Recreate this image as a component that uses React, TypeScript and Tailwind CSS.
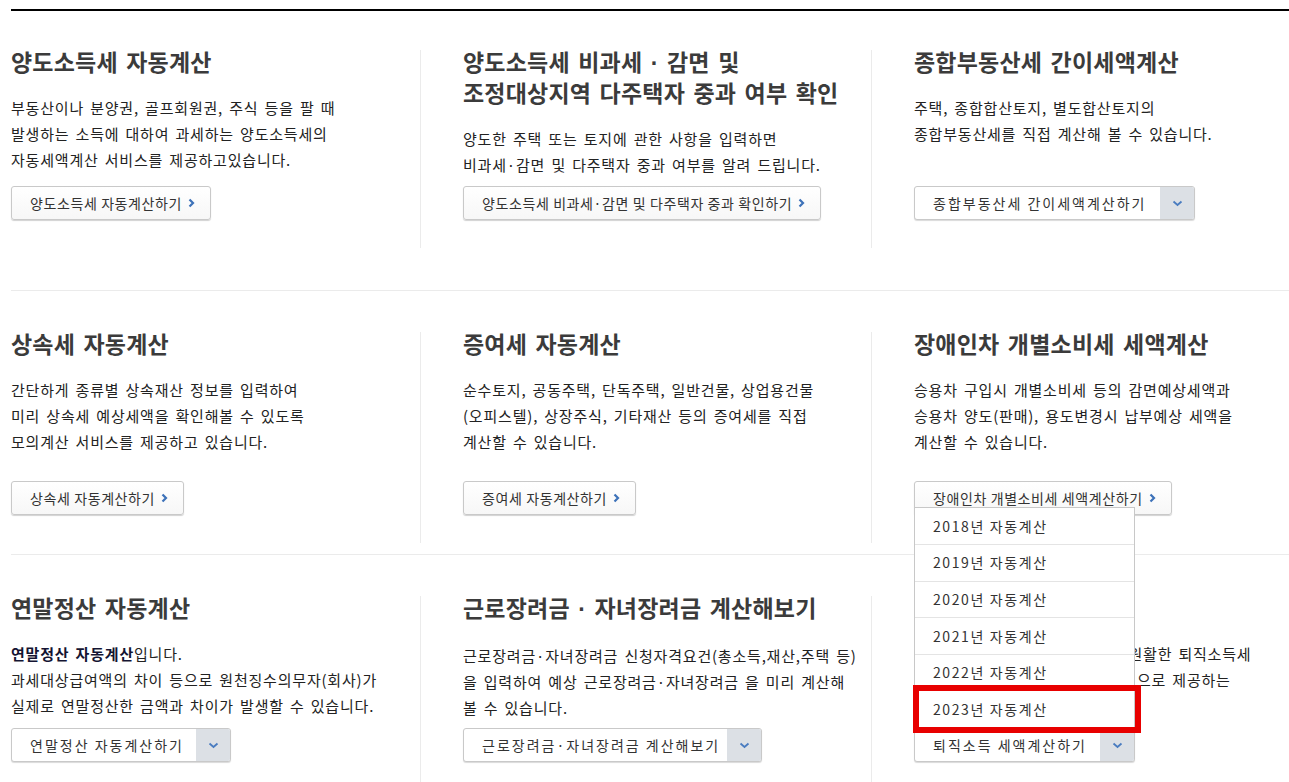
import React from 'react';

type Action =
  | { kind: 'link'; label: string }
  | { kind: 'select'; label: string; width: string; open?: boolean };

interface Item {
  title: string[];
  lines: React.ReactNode[];
  action: Action;
}

interface Row {
  rowClass: string;
  itemClass: string;
  items: Item[];
}

const years = ['2018', '2019', '2020', '2021', '2022', '2023'];

const ChevronRight = () => (
  <svg width="7" height="10" viewBox="0 0 7 10" className="shrink-0">
    <path d="M1.5 1.5L5 5L1.5 8.5" stroke="#3d72b9" strokeWidth="2.2" fill="none" />
  </svg>
);

const ChevronDown = () => (
  <svg width="11" height="7" viewBox="0 0 11 7">
    <path d="M1.5 1.5L5.5 5L9.5 1.5" stroke="#4a7cc0" strokeWidth="1.8" fill="none" />
  </svg>
);

// the CJK font draws the middle dot full width; the reference uses a narrow one
const withNarrowDot = (text: string) => {
  const parts = text.split('·');
  return parts.map((p, i) => (
    <React.Fragment key={i}>
      {p}
      {i < parts.length - 1 && <span className="font-['Liberation_Sans']">·</span>}
    </React.Fragment>
  ));
};

const LinkButton: React.FC<{ label: string }> = ({ label }) => (
  <button className="flex h-[34px] w-fit items-center gap-[6px] rounded-[3px] border border-[#c9c9c9] bg-gradient-to-b from-white to-[#f7f7f7] pl-[18px] pr-[15px] text-[14px] tracking-[0.6px] text-[#333] shadow-[0_1px_1px_rgba(0,0,0,0.18)]">
    <span className="whitespace-nowrap">{label}</span>
    <ChevronRight />
  </button>
);

const SelectButton: React.FC<{ label: string; width: string; open?: boolean }> = ({ label, width, open }) => (
  <div className={`relative ${width}`}>
    {open && (
      <div className="absolute bottom-full left-0 z-10 w-full border border-b-0 border-[#c8c8c8] bg-white">
        {years.map((y) => (
          <div
            key={y}
            className="flex h-[36.6px] items-center border-b border-[#e4e4e4] pl-[18px] text-[14px] tracking-[1.6px] text-[#333] last:border-b-0"
          >
            {y}년 자동계산
          </div>
        ))}
        <div className="pointer-events-none absolute left-[-2px] top-[177px] h-[48px] w-[228px] border-[6px] border-[#e80000]" />
      </div>
    )}
    <div className="flex h-[34px] overflow-hidden rounded-[3px] border border-[#c9c9c9] bg-white shadow-[0_1px_1px_rgba(0,0,0,0.15)]">
      <span className="flex flex-1 items-center whitespace-nowrap pl-[18px] text-[14px] tracking-[2px] text-[#333]">
        {label}
      </span>
      <span className="flex w-[34px] shrink-0 items-center justify-center bg-[#dce0e5]">
        <ChevronDown />
      </span>
    </div>
  </div>
);

const rows: Row[] = [
  {
    rowClass: 'pt-[39px] pb-[42px] border-b border-[#ebebeb]',
    itemClass: 'h-[198px]',
    items: [
      {
        title: ['양도소득세 자동계산'],
        lines: [
          '부동산이나 분양권, 골프회원권, 주식 등을 팔 때',
          '발생하는 소득에 대하여 과세하는 양도소득세의',
          '자동세액계산 서비스를 제공하고있습니다.',
        ],
        action: { kind: 'link', label: '양도소득세 자동계산하기' },
      },
      {
        title: ['양도소득세 비과세 · 감면 및', '조정대상지역 다주택자 중과 여부 확인'],
        lines: ['양도한 주택 또는 토지에 관한 사항을 입력하면', '비과세·감면 및 다주택자 중과 여부를 알려 드립니다.'],
        action: { kind: 'link', label: '양도소득세 비과세·감면 및 다주택자 중과 확인하기' },
      },
      {
        title: ['종합부동산세 간이세액계산'],
        lines: ['주택, 종합합산토지, 별도합산토지의', '종합부동산세를 직접 계산해 볼 수 있습니다.'],
        action: { kind: 'select', label: '종합부동산세 간이세액계산하기', width: 'w-[281px]' },
      },
    ],
  },
  {
    rowClass: 'pt-[41px] pb-[11px] border-b border-[#ebebeb]',
    itemClass: 'h-[211px]',
    items: [
      {
        title: ['상속세 자동계산'],
        lines: [
          '간단하게 종류별 상속재산 정보를 입력하여',
          '미리 상속세 예상세액을 확인해볼 수 있도록',
          '모의계산 서비스를 제공하고 있습니다.',
        ],
        action: { kind: 'link', label: '상속세 자동계산하기' },
      },
      {
        title: ['증여세 자동계산'],
        lines: [
          '순수토지, 공동주택, 단독주택, 일반건물, 상업용건물',
          '(오피스텔), 상장주식, 기타재산 등의 증여세를 직접',
          '계산할 수 있습니다.',
        ],
        action: { kind: 'link', label: '증여세 자동계산하기' },
      },
      {
        title: ['장애인차 개별소비세 세액계산'],
        lines: [
          '승용차 구입시 개별소비세 등의 감면예상세액과',
          '승용차 양도(판매), 용도변경시 납부예상 세액을',
          '계산할 수 있습니다.',
        ],
        action: { kind: 'link', label: '장애인차 개별소비세 세액계산하기' },
      },
    ],
  },
  {
    rowClass: 'pt-[41px]',
    itemClass: 'h-[194px]',
    items: [
      {
        title: ['연말정산 자동계산'],
        lines: [
          <>
            <b className="font-bold text-[#141432]">연말정산 자동계산</b>입니다.
          </>,
          '과세대상급여액의 차이 등으로 원천징수의무자(회사)가',
          '실제로 연말정산한 금액과 차이가 발생할 수 있습니다.',
        ],
        action: { kind: 'select', label: '연말정산 자동계산하기', width: 'w-[220px]' },
      },
      {
        title: ['근로장려금 · 자녀장려금 계산해보기'],
        lines: [
          '근로장려금·자녀장려금 신청자격요건(총소득,재산,주택 등)',
          '을 입력하여 예상 근로장려금·자녀장려금 을 미리 계산해',
          '볼 수 있습니다.',
        ],
        action: { kind: 'select', label: '근로장려금·자녀장려금 계산해보기', width: 'w-[299px]' },
      },
      {
        title: ['퇴직소득 세액계산'],
        lines: [
          '퇴직소득 계산을 원하시는 분께 원활한 퇴직소득세',
          <>
            <span className="tracking-[1.3px]">세액 계산 결과를 모의계산 방식</span>으로 제공하는
          </>,
        ],
        action: { kind: 'select', label: '퇴직소득 세액계산하기', width: 'w-[221px]', open: true },
      },
    ],
  },
];

export default function App() {
  return (
    <div
      className="h-[782px] w-full overflow-hidden bg-white"
      style={{ fontFamily: '"Noto Sans CJK KR", "Noto Sans", sans-serif' }}
    >
      <div className="ml-[11px] mt-[9px] border-t-2 border-black">
        {rows.map((row, ri) => (
          <div key={ri} className={`grid grid-cols-[409px_451px_1fr] ${row.rowClass}`}>
            {row.items.map((item, ii) => (
              <div
                key={ii}
                className={`flex flex-col pb-[28px] ${row.itemClass} ${
                  ii > 0 ? 'border-l border-[#ebebeb] pl-[42px]' : ''
                }`}
              >
                <h2 className="-mt-[3px] text-[23px] font-bold leading-[29px] tracking-[0.2px] text-[#3b3b3b] [word-spacing:3px]">
                  {item.title.map((t, ti) => (
                    <div key={ti} className="whitespace-nowrap">
                      {withNarrowDot(t)}
                    </div>
                  ))}
                </h2>
                <p className="mt-[19px] whitespace-nowrap text-[15px] leading-[26px] tracking-[0.8px] text-[#222] [word-spacing:2px]">
                  {item.lines.map((l, li) => (
                    <React.Fragment key={li}>
                      {l}
                      {li < item.lines.length - 1 && <br />}
                    </React.Fragment>
                  ))}
                </p>
                <div className="mt-auto">
                  {item.action.kind === 'link' ? (
                    <LinkButton label={item.action.label} />
                  ) : (
                    <SelectButton label={item.action.label} width={item.action.width} open={item.action.open} />
                  )}
                </div>
              </div>
            ))}
          </div>
        ))}
      </div>
    </div>
  );
}
